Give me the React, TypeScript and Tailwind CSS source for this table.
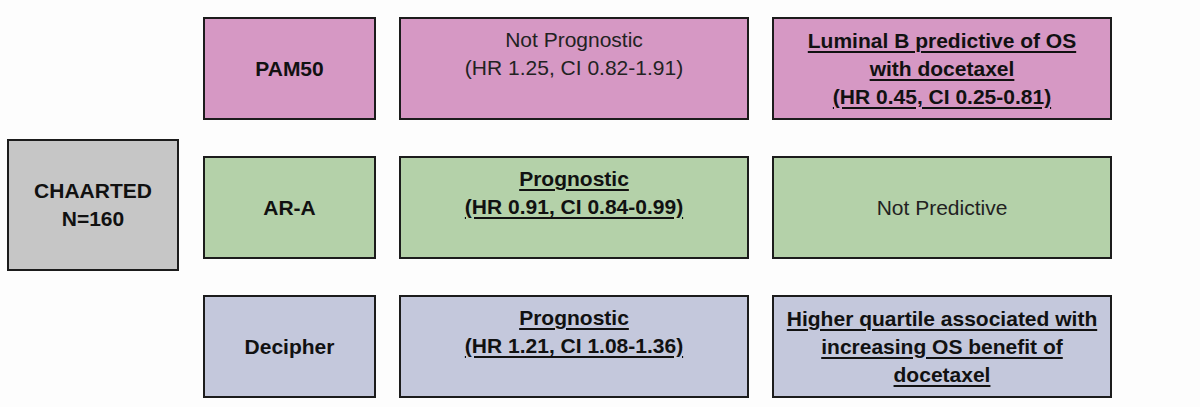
const rows = [
  {
    name: "PAM50",
    bg: "bg-[#d698c4]",
    prognostic: { lines: ["Not Prognostic", "(HR 1.25, CI 0.82-1.91)"], strong: false },
    predictive: {
      lines: ["Luminal B predictive of OS", "with docetaxel", "(HR 0.45, CI 0.25-0.81)"],
      strong: true,
    },
  },
  {
    name: "AR-A",
    bg: "bg-[#b4d1a9]",
    prognostic: { lines: ["Prognostic", "(HR 0.91, CI 0.84-0.99)"], strong: true },
    predictive: { lines: ["Not Predictive"], strong: false },
  },
  {
    name: "Decipher",
    bg: "bg-[#c4c8dc]",
    prognostic: { lines: ["Prognostic", "(HR 1.21, CI 1.08-1.36)"], strong: true },
    predictive: {
      lines: ["Higher quartile associated with", "increasing OS benefit of", "docetaxel"],
      strong: true,
    },
  },
];

const Lines = ({ lines, strong }: { lines: string[]; strong: boolean }) => (
  <>
    {lines.map((line, i) => (
      <div
        key={i}
        className={
          strong
            ? "font-bold underline decoration-2 underline-offset-[3px]"
            : "font-normal text-[#222]"
        }
      >
        {line}
      </div>
    ))}
  </>
);

export default function App() {
  return (
    <div
      className="w-[1200px] h-[407px] bg-[#fdfdfd] text-[#111] text-[21px] leading-[28px] flex items-center pl-[7px] pt-[2px]"
      style={{ fontFamily: '"Liberation Sans", Arial, sans-serif' }}
    >
      <div className="w-[172px] h-[132px] bg-[#c6c6c6] border-2 border-[#1c1c1c] flex flex-col items-center justify-center font-bold text-center">
        <div>CHAARTED</div>
        <div>N=160</div>
      </div>

      <div className="ml-[24px] grid grid-cols-[173px_350px_340px] gap-x-[23px] gap-y-[36px] pt-[6px]">
        {rows.map((row) => (
          <div key={row.name} className="contents">
            <div
              className={`${row.bg} h-[103px] border-2 border-[#1c1c1c] flex items-center justify-center font-bold`}
            >
              {row.name}
            </div>
            <div
              className={`${row.bg} h-[103px] border-2 border-[#1c1c1c] flex flex-col items-center justify-start pt-[7px] text-center`}
            >
              <Lines {...row.prognostic} />
            </div>
            <div
              className={`${row.bg} h-[103px] border-2 border-[#1c1c1c] flex flex-col items-center justify-center text-center`}
            >
              <Lines {...row.predictive} />
            </div>
          </div>
        ))}
      </div>
    </div>
  );
}
